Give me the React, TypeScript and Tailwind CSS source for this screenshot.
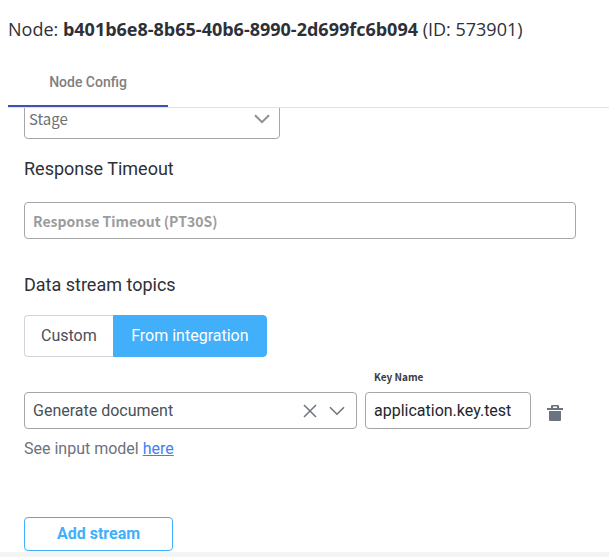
import { useState } from "react";

const SOURCE = "font-['Noto_Sans_CJK_SC',sans-serif]";
const FIELD = "h-[37px] w-full rounded border border-[#a6a6a6] bg-white";

function Chevron({ className }: { className: string }) {
  return (
    <svg viewBox="0 0 16 10" className={className} fill="none" stroke="currentColor" aria-hidden="true">
      <path d="M1 1.2 8 8.2 15 1.2" />
    </svg>
  );
}

export default function App() {
  const [source, setSource] = useState("integration");
  const [timeout, setTimeoutValue] = useState("");
  const [keyName, setKeyName] = useState("application.key.test");

  return (
    <div className="flex h-screen flex-col bg-[#f4f4f4] font-[Roboto,sans-serif]">
      <main className="flex min-h-0 flex-1 flex-col bg-white pl-2">
        <h1 className="pt-[15px] font-['Open_Sans',sans-serif] text-lg leading-7 text-[#2f3037]">
          Node: <strong className="font-bold">b401b6e8-8b65-40b6-8990-2d699fc6b094</strong> (ID: 573901)
        </h1>

        <div role="tablist" className="mt-4 flex border-b border-[#e0e0e0]">
          <button
            role="tab"
            aria-selected="true"
            className="h-12 w-40 border-b-2 border-[#3f51b5] text-sm font-medium text-[#808080]"
          >
            Node Config
          </button>
        </div>

        <section className="min-h-0 flex-1 overflow-hidden pr-[33px] pl-4">
          {/* The form rests slightly scrolled under the tab bar. */}
          <form className="-mt-1.5" onSubmit={(e) => e.preventDefault()}>
            <div className="relative w-64">
              <select
                aria-label="Stage"
                className={`${FIELD} ${SOURCE} appearance-none px-1 pb-0.5 text-[15px] text-[#6f7073]`}
              >
                <option>Stage</option>
              </select>
              <Chevron className="pointer-events-none absolute top-3 right-2.5 h-2.5 w-4 stroke-2 text-[#8d9094]" />
            </div>

            <label htmlFor="timeout" className="mt-4 block text-lg leading-[27px] text-[#2f3037]">
              Response Timeout
            </label>
            <input
              id="timeout"
              value={timeout}
              onChange={(e) => setTimeoutValue(e.target.value)}
              placeholder="Response Timeout (PT30S)"
              className={`${FIELD} ${SOURCE} mt-5 block px-2 text-sm font-bold placeholder:text-[#9c9c9c]`}
            />

            <h2 className="mt-8 text-lg leading-[27px] text-[#2f3037]">Data stream topics</h2>
            <div className="mt-[17px] flex h-[42px] w-[243px] text-base">
              <button
                type="button"
                aria-pressed={source === "custom"}
                onClick={() => setSource("custom")}
                className="rounded-l-sm border border-r-0 border-[#ced4da] px-4 text-[#495057]"
              >
                Custom
              </button>
              <button
                type="button"
                aria-pressed={source === "integration"}
                onClick={() => setSource("integration")}
                className="flex-1 rounded-r-sm border border-[#42affa] bg-[#42affa] text-white"
              >
                From integration
              </button>
            </div>

            <div className="mt-3 mr-[5px] flex items-end gap-2">
              <div className="relative flex-1">
                <select
                  aria-label="Integration"
                  className={`${FIELD} block appearance-none px-2 text-base text-[#495057]`}
                >
                  <option>Generate document</option>
                </select>
                <div className="pointer-events-none absolute inset-y-0 right-3 flex items-center gap-3 text-[#6c757d]">
                  <button type="button" aria-label="Clear" className="pointer-events-auto">
                    <svg viewBox="0 0 14 14" className="size-3.5" fill="none" stroke="currentColor" strokeWidth="1.5">
                      <path d="M1 1 13 13M13 1 1 13" />
                    </svg>
                  </button>
                  <Chevron className="h-2.5 w-4 stroke-[1.6]" />
                </div>
              </div>
              <div className="w-[166px]">
                <label
                  htmlFor="key"
                  className={`${SOURCE} block px-[9px] pb-[7px] text-[10px] leading-4 font-bold text-[#3a3b42]`}
                >
                  Key Name
                </label>
                <input
                  id="key"
                  value={keyName}
                  onChange={(e) => setKeyName(e.target.value)}
                  className={`${FIELD} block px-2 text-base text-[#24252b]`}
                />
              </div>
              <button type="button" aria-label="Delete stream" className="p-2 text-[#6b7280]">
                <svg viewBox="0 0 16 16" className="size-4" fill="currentColor">
                  <path fillRule="evenodd" d="M5 0H11Q12 0 12 1V3H16V5H0V3H4V1Q4 0 5 0ZM6 1.5V3H10V1.5Z" />
                  <path d="M2 6H14V15Q14 16 13 16H3Q2 16 2 15Z" />
                </svg>
              </button>
            </div>

            <p className="mt-2 text-base leading-6 text-[#6b7280]">
              See input model{" "}
              <a href="#model" className="text-[#3b82f6] underline">
                here
              </a>
            </p>

            <button
              type="button"
              className="mt-14 h-[34px] w-[149px] rounded border border-[#42affa] text-base font-bold text-[#42affa]"
            >
              Add stream
            </button>
          </form>
        </section>
      </main>
      <div className="h-[5px]" />
    </div>
  );
}
